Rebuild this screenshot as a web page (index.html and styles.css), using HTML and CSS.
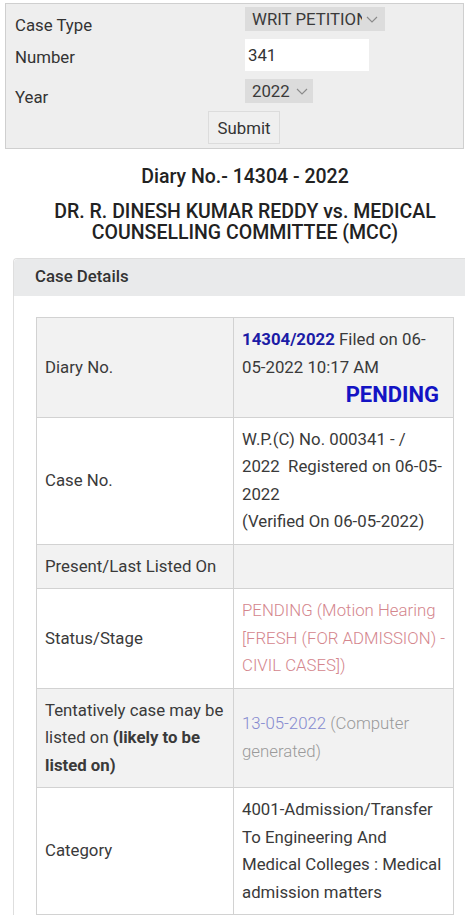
FILE: index.html
```html
<!DOCTYPE html>
<html lang="en">
<head>
<meta charset="utf-8">
<title>Case Status</title>
<link rel="stylesheet" href="styles.css">
</head>
<body>
<form class="search">
  <div class="search-grid">
    <label class="lbl">Case Type</label>
    <div class="select select-type"><span class="select-text">WRIT PETITION</span><svg class="chev" viewBox="0 0 12 7" width="12" height="7"><path d="M1 1 L6 6 L11 1" fill="none" stroke="#8a8a8a" stroke-width="1.1"/></svg></div>
    <label class="lbl">Number</label>
    <div class="input">341</div>
    <label class="lbl">Year</label>
    <div class="select select-year"><span class="select-text">2022</span><svg class="chev" viewBox="0 0 12 7" width="12" height="7"><path d="M1 1 L6 6 L11 1" fill="none" stroke="#8a8a8a" stroke-width="1.1"/></svg></div>
  </div>
  <div class="submit-row"><button type="button" class="submit">Submit</button></div>
</form>

<div class="result">
  <h2 class="diary">Diary No.- 14304 - 2022</h2>
  <h2 class="parties">DR. R. DINESH KUMAR REDDY vs. MEDICAL COUNSELLING COMMITTEE (MCC)</h2>

  <div class="card">
    <div class="card-head">Case Details</div>
    <div class="card-body">
      <table class="details">
        <tr class="odd">
          <td class="k">Diary No.</td>
          <td class="v"><b class="dno">14304/2022</b> Filed on 06-05-2022 10:17 AM<div class="pending">PENDING</div></td>
        </tr>
        <tr>
          <td class="k">Case No.</td>
          <td class="v">W.P.(C) No. 000341 - /<br>2022&nbsp; Registered on 06-05-2022<br>(Verified On 06-05-2022)</td>
        </tr>
        <tr class="odd">
          <td class="k">Present/Last Listed On</td>
          <td class="v"></td>
        </tr>
        <tr>
          <td class="k">Status/Stage</td>
          <td class="v"><span class="status">PENDING (Motion Hearing [FRESH (FOR ADMISSION) - CIVIL CASES])</span></td>
        </tr>
        <tr class="odd">
          <td class="k">Tentatively case may be listed on <b>(likely to be listed on)</b></td>
          <td class="v"><span class="tdate">13-05-2022</span> <span class="gen">(Computer generated)</span></td>
        </tr>
        <tr>
          <td class="k">Category</td>
          <td class="v">4001-Admission/Transfer To Engineering And Medical Colleges : Medical admission matters</td>
        </tr>
      </table>
    </div>
  </div>
</div>
</body>
</html>
```

FILE: styles.css
```css
html, body {
  overflow-x: hidden;
}
body {
  margin: 0;
  font-family: Roboto, "Liberation Sans", Arial, sans-serif;
  font-size: 16.8px;
  color: #333;
  background: #fff;
}

/* search form */
.search {
  margin: 3px 1px 0 5px;
  border: 1px solid #cfcfcf;
  background: #eeeeee;
  padding: 3px 0 4px 9px;
}
.search-grid {
  display: grid;
  grid-template-columns: 230px auto;
  grid-template-rows: 24px 32px 24px;
  row-gap: 8px;
  justify-items: start;
}
.lbl {
  padding-top: 9px;
  line-height: 19px;
  color: #333;
  white-space: nowrap;
}
.select {
  height: 24px;
  background: #dcdcdc;
  display: flex;
  align-items: center;
  padding: 0 5px 0 7px;
  box-sizing: border-box;
  color: #3a3a3a;
}
.select-type { width: 140px; }
.select-year { width: 68px; }
.select-text {
  overflow: hidden;
  white-space: nowrap;
  flex: 1;
  line-height: 24px;
}
.select-type .select-text { max-width: 110px; }
.chev {
  flex: none;
  margin-left: 4px;
}
.input {
  width: 124px;
  height: 32px;
  box-sizing: border-box;
  background: #fff;
  padding: 0 3px;
  line-height: 32px;
  color: #333;
}
.submit-row {
  padding: 8px 0 0 193px;
}
.submit {
  font-family: inherit;
  font-size: 16.8px;
  color: #333;
  background: #efefef;
  border: 1px solid #dcdcdc;
  width: 72px;
  height: 33px;
  padding: 0;
  margin: 0;
}

/* result */
.result {
  margin-left: 13px;
  width: 464px;
}
.diary, .parties {
  margin: 0;
  text-align: center;
  font-size: 19.5px;
  font-weight: 500;
  line-height: 21px;
  color: #222;
}
.diary { margin-top: 17px; }
.parties { margin-top: 14px; padding: 0 4px; }

.card {
  margin-top: 15px;
  border: 1px solid #dedede;
  border-radius: 4px 4px 0 0;
  border-bottom: 0;
}
.card-head {
  background: #e9eaeb;
  padding: 8px 21px 10px;
  line-height: 19px;
  font-weight: 500;
  color: #333;
  border-radius: 4px 4px 0 0;
}
.card-body {
  padding: 21px 22px 0;
  background: #fff;
}
.details {
  width: 418px;
  border-collapse: collapse;
  table-layout: fixed;
  border: 1px solid #d2d2d2;
  line-height: 27.5px;
  color: #3a3a3a;
}
.details td {
  border: 1px solid #d2d2d2;
  padding: 8px 8px;
  vertical-align: middle;
}
.details td.k { width: 180px; }
.details tr.odd td { background: #f2f2f2; }
.details b { font-weight: 700; }
.dno { color: #1c1ca6; }
.pending {
  text-align: right;
  font-weight: 700;
  font-size: 22px;
  color: #1414c4;
  padding-right: 6px;
}
.status {
  color: #d4868d;
  font-weight: 300;
}
.tdate {
  color: #8489cf;
  font-weight: 300;
}
.gen {
  color: #9a9a9a;
  font-weight: 300;
}
```
